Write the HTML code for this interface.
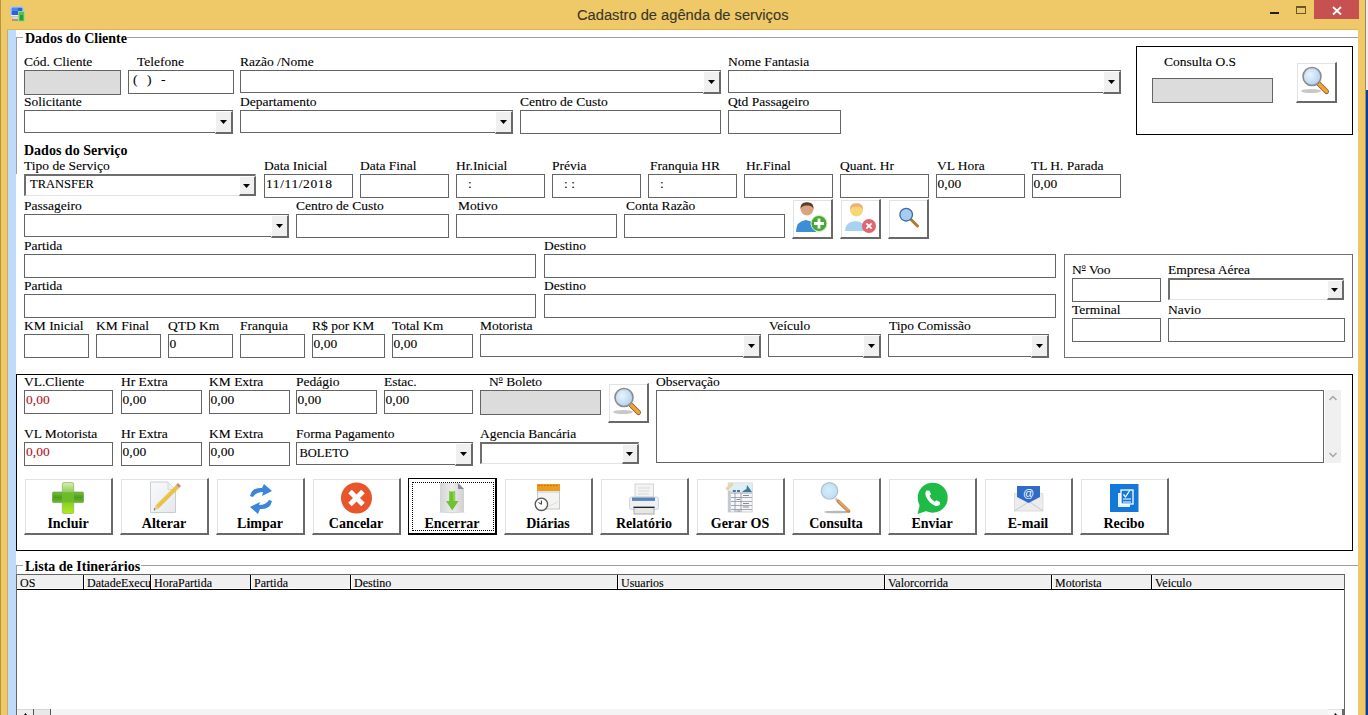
<!DOCTYPE html><html><head><meta charset="utf-8"><style>
*{margin:0;padding:0;box-sizing:border-box}
html,body{width:1368px;height:715px;overflow:hidden;background:#fff;position:relative;font-family:"Liberation Serif",serif;-webkit-text-stroke:0.1px}
div,span,i,svg{position:absolute;display:block}
.l{white-space:nowrap;line-height:1;color:#000}
.tb{background:#fff;border:1px solid #646464}
.tb span{top:1px;font-size:13.5px;line-height:16px;white-space:nowrap}
.cb{background:#fff;border:1px solid #646464}
.cb span{left:5px;top:0px;font-size:12.5px;line-height:16px;white-space:nowrap}
.dd{background:#F0F0F0;border-right:2px solid #696969;border-bottom:2px solid #696969;border-top:1px solid #fff;border-left:1px solid #fff}
.sk{border-top:2px solid #6E6E6E;border-left:2px solid #6E6E6E;border-right:1px solid #E3E3E3;border-bottom:1px solid #E3E3E3}
.bt{background:#fff;border-top:1px solid #fff;border-left:1px solid #fff;border-right:2px solid #696969;border-bottom:2px solid #696969;box-shadow:inset 1px 1px 0 #E3E3E3}
.bb{background:#fff;border-top:1px solid #fff;border-left:1px solid #fff;border-right:2px solid #696969;border-bottom:2px solid #696969;box-shadow:inset 1px 1px 0 #E3E3E3}
.bb b{position:absolute;left:0;right:0;top:38px;text-align:center;font-size:14px;line-height:14px;font-weight:700;white-space:nowrap;-webkit-text-stroke:0}
.gl{background:#A0A0A0}
.hd{font-size:12px;line-height:12px;white-space:nowrap;top:5px}
</style></head><body>

<div style="left:0;top:0;width:1368px;height:30px;background:#EFC867"></div>
<div style="left:0;top:0;width:8px;height:715px;background:#EFC867"></div>
<div style="left:0;top:0;width:1px;height:715px;background:#B8923F"></div>
<div style="left:7px;top:29px;width:1px;height:686px;background:#C9A872"></div>
<div style="left:7px;top:29px;width:1351px;height:1px;background:#D9B468"></div>
<div style="left:1358px;top:29px;width:1px;height:686px;background:#CDAE78"></div>
<div style="left:1358px;top:0;width:10px;height:715px;background:#EFC867"></div>
<div style="left:1365px;top:0;width:1px;height:715px;background:#A88A4A"></div>
<div style="left:1366px;top:0;width:2px;height:90px;background:#EDEDED"></div>
<div style="left:1366px;top:90px;width:2px;height:625px;background:#0A3CA8"></div>
<div style="left:8px;top:30px;width:8px;height:685px;background:#BEDBFA"></div>
<div style="left:16px;top:30px;width:1342px;height:1px;background:#FEFDE6"></div>
<div style="left:577px;top:6px;font-family:'Liberation Sans',sans-serif;font-size:14.7px;line-height:18px;color:#3A3626;white-space:nowrap">Cadastro de agênda de serviços</div>
<div style="left:1270px;top:12px;width:9px;height:2px;background:#222"></div>
<div style="left:1296px;top:6px;width:10px;height:8px;border:1px solid #6A5626;border-top-width:2px"></div>
<div style="left:1314px;top:0;width:45px;height:19px;background:#C75050"></div>
<svg style="left:1331px;top:5px" width="12" height="11" viewBox="0 0 12 11"><path d="M2 2 L10 9.5 M10 2 L2 9.5" stroke="#fff" stroke-width="1.8"/></svg>
<svg style="left:6px;top:2px" width="24" height="24" viewBox="0 0 24 24"><rect x="4.5" y="4.5" width="13" height="10" fill="#E4ECF6" stroke="#B8C6D6" stroke-width="1"/><rect x="5.5" y="5.5" width="11" height="7.5" fill="#2C62D6"/><rect x="6" y="6" width="6" height="3" fill="#4A86E8"/><rect x="7" y="15" width="5" height="2.5" fill="#D8D8D8"/><rect x="6" y="17.5" width="6" height="1" fill="#6A6A50"/><rect x="12.5" y="9.5" width="6" height="10" fill="#5BBE4E" stroke="#A6E090" stroke-width="0.8"/><rect x="14" y="13" width="3" height="5" fill="#2E9A36"/></svg>
<div class="gl" style="left:16px;top:37px;width:7px;height:1px"></div>
<div class="gl" style="left:127px;top:37px;width:1231px;height:1px"></div>
<div class="gl" style="left:16px;top:37px;width:1px;height:137px"></div>
<div class="l" style="left:25px;top:31.77px;font-size:14px;font-weight:700;-webkit-text-stroke:0;">Dados do Cliente</div>
<div class="l" style="left:24px;top:54.69px;font-size:13.5px;">Cód. Cliente</div>
<div class="l" style="left:137px;top:54.69px;font-size:13.5px;">Telefone</div>
<div class="l" style="left:240px;top:54.69px;font-size:13.5px;">Razão /Nome</div>
<div class="l" style="left:728px;top:54.69px;font-size:13.5px;">Nome Fantasia</div>
<div class="tb" style="left:24px;top:70px;width:97px;height:25px;background:#DCDCDC;"></div>
<div class="tb" style="left:128px;top:70px;width:106px;height:24px"><span style="left:4px;top:1px">(</span><span style="left:18px;top:1px">)</span><span style="left:32px;top:1px">-</span></div>
<div class="cb" style="left:240px;top:70px;width:481px;height:23px;"></div>
<div class="dd" style="left:703px;top:71px;width:18px;height:23px"></div>
<svg style="left:708px;top:80px" width="7" height="4" viewBox="0 0 7 4"><path d="M0 0H7L3.5 4Z" fill="#000"/></svg>
<div class="cb" style="left:728px;top:70px;width:393px;height:23px;"></div>
<div class="dd" style="left:1103px;top:71px;width:18px;height:23px"></div>
<svg style="left:1108px;top:80px" width="7" height="4" viewBox="0 0 7 4"><path d="M0 0H7L3.5 4Z" fill="#000"/></svg>
<div style="left:1136px;top:46px;width:217px;height:89px;border:1px solid #000"></div>
<div class="l" style="left:1164px;top:54.69px;font-size:13.5px;">Consulta O.S</div>
<div class="tb" style="left:1152px;top:78px;width:121px;height:25px;background:#DCDCDC;"></div>
<div class="bt" style="left:1296px;top:62px;width:41px;height:41px;"><svg style="left:2px;top:2px" width="36" height="36" viewBox="0 0 36 36"><defs><radialGradient id="lens" cx="0.4" cy="0.4" r="0.7"><stop offset="0" stop-color="#EAF4FD"/><stop offset="1" stop-color="#A9CDEE"/></radialGradient></defs><ellipse cx="12" cy="26" rx="10" ry="2" fill="#C8C8C8"/><path d="M19.5 18.5 L27.5 26.5" stroke="#8A5A20" stroke-width="5" stroke-linecap="round"/><path d="M19.5 18.5 L27.5 26.5" stroke="#F2A23A" stroke-width="3.4" stroke-linecap="round"/><circle cx="13" cy="11.5" r="9" fill="url(#lens)" stroke="#8C8C8C" stroke-width="1.6"/></svg></div>
<div class="l" style="left:24px;top:94.69px;font-size:13.5px;">Solicitante</div>
<div class="l" style="left:240px;top:94.69px;font-size:13.5px;">Departamento</div>
<div class="l" style="left:520px;top:94.69px;font-size:13.5px;">Centro de Custo</div>
<div class="l" style="left:728px;top:94.69px;font-size:13.5px;">Qtd Passageiro</div>
<div class="cb" style="left:24px;top:110px;width:209px;height:23px;"></div>
<div class="dd" style="left:215px;top:111px;width:18px;height:23px"></div>
<svg style="left:220px;top:120px" width="7" height="4" viewBox="0 0 7 4"><path d="M0 0H7L3.5 4Z" fill="#000"/></svg>
<div class="cb" style="left:240px;top:110px;width:273px;height:23px;"></div>
<div class="dd" style="left:495px;top:111px;width:18px;height:23px"></div>
<svg style="left:500px;top:120px" width="7" height="4" viewBox="0 0 7 4"><path d="M0 0H7L3.5 4Z" fill="#000"/></svg>
<div class="tb" style="left:520px;top:110px;width:201px;height:24px;"></div>
<div class="tb" style="left:728px;top:110px;width:113px;height:24px;"></div>
<div class="l" style="left:24px;top:143.78px;font-size:14px;font-weight:700;-webkit-text-stroke:0;">Dados do Serviço</div>
<div class="l" style="left:24px;top:158.69px;font-size:13.5px;">Tipo de Serviço</div>
<div class="l" style="left:264px;top:158.69px;font-size:13.5px;">Data Inicial</div>
<div class="l" style="left:360px;top:158.69px;font-size:13.5px;">Data Final</div>
<div class="l" style="left:456px;top:158.69px;font-size:13.5px;">Hr.Inicial</div>
<div class="l" style="left:552px;top:158.69px;font-size:13.5px;">Prévia</div>
<div class="l" style="left:650px;top:158.69px;font-size:13.5px;">Franquia HR</div>
<div class="l" style="left:746px;top:158.69px;font-size:13.5px;">Hr.Final</div>
<div class="l" style="left:840px;top:158.69px;font-size:13.5px;">Quant. Hr</div>
<div class="l" style="left:937px;top:158.69px;font-size:13.5px;">VL Hora</div>
<div class="l" style="left:1031px;top:158.69px;font-size:13.5px;">TL H. Parada</div>
<div class="cb sk" style="left:24px;top:174px;width:232px;height:22px;"><span style="left:4px;top:0px">TRANSFER</span></div>
<div class="dd" style="left:239px;top:176px;width:17px;height:20px"></div>
<svg style="left:243px;top:184px" width="7" height="4" viewBox="0 0 7 4"><path d="M0 0H7L3.5 4Z" fill="#000"/></svg>
<div class="tb" style="left:264px;top:174px;width:89px;height:24px;"><span style="left:1px;letter-spacing:0.6px;">11/11/2018</span></div>
<div class="tb" style="left:360px;top:174px;width:89px;height:24px;"></div>
<div class="tb" style="left:456px;top:174px;width:89px;height:24px;"><span style="left:11px;">:</span></div>
<div class="tb" style="left:552px;top:174px;width:89px;height:24px;"><span style="left:11px;">: :</span></div>
<div class="tb" style="left:648px;top:174px;width:89px;height:24px;"><span style="left:11px;">:</span></div>
<div class="tb" style="left:744px;top:174px;width:89px;height:24px;"></div>
<div class="tb" style="left:840px;top:174px;width:89px;height:24px;"></div>
<div class="tb" style="left:936px;top:174px;width:89px;height:24px;"><span style="left:0.5px;">0,00</span></div>
<div class="tb" style="left:1032px;top:174px;width:89px;height:24px;"><span style="left:0.5px;">0,00</span></div>
<div class="l" style="left:24px;top:198.69px;font-size:13.5px;">Passageiro</div>
<div class="l" style="left:296px;top:198.69px;font-size:13.5px;">Centro de Custo</div>
<div class="l" style="left:458px;top:198.69px;font-size:13.5px;">Motivo</div>
<div class="l" style="left:626px;top:198.69px;font-size:13.5px;">Conta Razão</div>
<div class="cb" style="left:24px;top:214px;width:265px;height:23px;"></div>
<div class="dd" style="left:271px;top:215px;width:18px;height:23px"></div>
<svg style="left:276px;top:224px" width="7" height="4" viewBox="0 0 7 4"><path d="M0 0H7L3.5 4Z" fill="#000"/></svg>
<div class="tb" style="left:296px;top:214px;width:153px;height:24px;"></div>
<div class="tb" style="left:456px;top:214px;width:161px;height:24px;"></div>
<div class="tb" style="left:624px;top:214px;width:161px;height:24px;"></div>
<div class="bt" style="left:792px;top:199px;width:41px;height:40px;"><svg style="left:1px;top:1px" width="38" height="38" viewBox="0 0 38 38"><path d="M2 31 Q2 20 12 19 Q22 20 22 31 Z" fill="#3C8FD6"/><circle cx="13" cy="8" r="6.5" fill="#D9A581"/><path d="M6.5 8 Q6 1 13 1.2 Q20 1 19.5 8 Q18 4 13 4.5 Q8 4 6.5 8Z" fill="#5A3C26"/><circle cx="25" cy="22.5" r="8" fill="#45A83C" stroke="#D8F5A8" stroke-width="1"/><path d="M25 17.5 V27.5 M20 22.5 H30" stroke="#fff" stroke-width="2.8"/></svg></div>
<div class="bt" style="left:840px;top:199px;width:41px;height:40px;"><svg style="left:1px;top:1px" width="38" height="38" viewBox="0 0 38 38"><path d="M3 30 Q3 21 13.5 20 Q24 21 24 30 Z" fill="#A8D2F2"/><circle cx="14.5" cy="9" r="6.5" fill="#F5D77A"/><path d="M8 9 Q7.5 2 14.5 2.2 Q21.5 2 21 9 Q19.5 5 14.5 5.5 Q9.5 5 8 9Z" fill="#EFAE6E"/><circle cx="27" cy="25" r="7" fill="#E26470"/><path d="M24.3 22.3 L29.7 27.7 M29.7 22.3 L24.3 27.7" stroke="#fff" stroke-width="1.8"/></svg></div>
<div class="bt" style="left:888px;top:199px;width:41px;height:40px;"><svg style="left:1px;top:1px" width="38" height="38" viewBox="0 0 38 38"><path d="M20.5 18 L27.5 25" stroke="#B07A2A" stroke-width="3" stroke-linecap="round"/><circle cx="16.2" cy="13.7" r="6.3" fill="#A6CCF2" stroke="#3E68A8" stroke-width="1.3"/></svg></div>
<div class="l" style="left:24px;top:238.69px;font-size:13.5px;">Partida</div>
<div class="l" style="left:544px;top:238.69px;font-size:13.5px;">Destino</div>
<div class="tb" style="left:24px;top:254px;width:512px;height:24px;"></div>
<div class="tb" style="left:544px;top:254px;width:512px;height:24px;"></div>
<div class="l" style="left:24px;top:278.69px;font-size:13.5px;">Partida</div>
<div class="l" style="left:544px;top:278.69px;font-size:13.5px;">Destino</div>
<div class="tb" style="left:24px;top:294px;width:512px;height:24px;"></div>
<div class="tb" style="left:544px;top:294px;width:512px;height:24px;"></div>
<div style="left:1064px;top:254px;width:289px;height:104px;border:1px solid #707070"></div>
<div class="l" style="left:1072px;top:262.69px;font-size:13.5px;">N<sup style='font-size:8px;text-decoration:underline;vertical-align:5px'>o</sup> Voo</div>
<div class="l" style="left:1168px;top:262.69px;font-size:13.5px;">Empresa Aérea</div>
<div class="tb" style="left:1072px;top:278px;width:89px;height:24px;"></div>
<div class="cb sk" style="left:1168px;top:278px;width:176px;height:22px;"></div>
<div class="dd" style="left:1327px;top:280px;width:17px;height:20px"></div>
<svg style="left:1331px;top:288px" width="7" height="4" viewBox="0 0 7 4"><path d="M0 0H7L3.5 4Z" fill="#000"/></svg>
<div class="l" style="left:1072px;top:302.69px;font-size:13.5px;">Terminal</div>
<div class="l" style="left:1168px;top:302.69px;font-size:13.5px;">Navio</div>
<div class="tb" style="left:1072px;top:318px;width:89px;height:24px;"></div>
<div class="tb" style="left:1168px;top:318px;width:177px;height:24px;"></div>
<div class="l" style="left:24px;top:318.69px;font-size:13.5px;">KM Inicial</div>
<div class="l" style="left:96px;top:318.69px;font-size:13.5px;">KM Final</div>
<div class="l" style="left:168px;top:318.69px;font-size:13.5px;">QTD Km</div>
<div class="l" style="left:240px;top:318.69px;font-size:13.5px;">Franquia</div>
<div class="l" style="left:312px;top:318.69px;font-size:13.5px;">R$ por KM</div>
<div class="l" style="left:392px;top:318.69px;font-size:13.5px;">Total Km</div>
<div class="l" style="left:480px;top:318.69px;font-size:13.5px;">Motorista</div>
<div class="l" style="left:769px;top:318.69px;font-size:13.5px;">Veículo</div>
<div class="l" style="left:889px;top:318.69px;font-size:13.5px;">Tipo Comissão</div>
<div class="tb" style="left:24px;top:334px;width:65px;height:24px;"></div>
<div class="tb" style="left:96px;top:334px;width:65px;height:24px;"></div>
<div class="tb" style="left:168px;top:334px;width:65px;height:24px;"><span style="left:0.5px;">0</span></div>
<div class="tb" style="left:240px;top:334px;width:65px;height:24px;"></div>
<div class="tb" style="left:312px;top:334px;width:73px;height:24px;"><span style="left:0.5px;">0,00</span></div>
<div class="tb" style="left:392px;top:334px;width:81px;height:24px;"><span style="left:0.5px;">0,00</span></div>
<div class="cb" style="left:480px;top:334px;width:281px;height:23px;"></div>
<div class="dd" style="left:743px;top:335px;width:18px;height:23px"></div>
<svg style="left:748px;top:344px" width="7" height="4" viewBox="0 0 7 4"><path d="M0 0H7L3.5 4Z" fill="#000"/></svg>
<div class="cb" style="left:768px;top:334px;width:113px;height:23px;"></div>
<div class="dd" style="left:863px;top:335px;width:18px;height:23px"></div>
<svg style="left:868px;top:344px" width="7" height="4" viewBox="0 0 7 4"><path d="M0 0H7L3.5 4Z" fill="#000"/></svg>
<div class="cb" style="left:888px;top:334px;width:161px;height:23px;"></div>
<div class="dd" style="left:1031px;top:335px;width:18px;height:23px"></div>
<svg style="left:1036px;top:344px" width="7" height="4" viewBox="0 0 7 4"><path d="M0 0H7L3.5 4Z" fill="#000"/></svg>
<div style="left:16px;top:374px;width:1337px;height:177px;border:1px solid #000"></div>
<div class="l" style="left:24px;top:374.69px;font-size:13.5px;">VL.Cliente</div>
<div class="l" style="left:121px;top:374.69px;font-size:13.5px;">Hr Extra</div>
<div class="l" style="left:209px;top:374.69px;font-size:13.5px;">KM Extra</div>
<div class="l" style="left:296px;top:374.69px;font-size:13.5px;">Pedágio</div>
<div class="l" style="left:384px;top:374.69px;font-size:13.5px;">Estac.</div>
<div class="l" style="left:489px;top:374.69px;font-size:13.5px;">N<sup style='font-size:8px;text-decoration:underline;vertical-align:5px'>o</sup> Boleto</div>
<div class="l" style="left:656px;top:374.69px;font-size:13.5px;">Observação</div>
<div class="tb" style="left:24px;top:390px;width:89px;height:24px;"><span style="left:1px;color:#B4101A;">0,00</span></div>
<div class="tb" style="left:121px;top:390px;width:81px;height:24px;"><span style="left:0.5px;">0,00</span></div>
<div class="tb" style="left:209px;top:390px;width:81px;height:24px;"><span style="left:0.5px;">0,00</span></div>
<div class="tb" style="left:296px;top:390px;width:81px;height:24px;"><span style="left:0.5px;">0,00</span></div>
<div class="tb" style="left:384px;top:390px;width:89px;height:24px;"><span style="left:0.5px;">0,00</span></div>
<div class="tb" style="left:480px;top:390px;width:121px;height:25px;background:#DCDCDC;"></div>
<div class="bt" style="left:608px;top:383px;width:41px;height:40px;"><svg style="left:2px;top:2px" width="36" height="36" viewBox="0 0 36 36"><defs><radialGradient id="lens" cx="0.4" cy="0.4" r="0.7"><stop offset="0" stop-color="#EAF4FD"/><stop offset="1" stop-color="#A9CDEE"/></radialGradient></defs><ellipse cx="12" cy="26" rx="10" ry="2" fill="#C8C8C8"/><path d="M19.5 18.5 L27.5 26.5" stroke="#8A5A20" stroke-width="5" stroke-linecap="round"/><path d="M19.5 18.5 L27.5 26.5" stroke="#F2A23A" stroke-width="3.4" stroke-linecap="round"/><circle cx="13" cy="11.5" r="9" fill="url(#lens)" stroke="#8C8C8C" stroke-width="1.6"/></svg></div>
<div class="tb" style="left:656px;top:390px;width:668px;height:73px;"></div>
<div style="left:1325px;top:390px;width:16px;height:73px;background:#F0F0F0"></div>
<svg style="left:1325px;top:390px" width="16" height="73" viewBox="0 0 16 73"><path d="M4.5 10 L8 6.5 L11.5 10 M4.5 63 L8 66.5 L11.5 63" stroke="#A6A6A6" stroke-width="1.5" fill="none"/></svg>
<div class="l" style="left:24px;top:426.69px;font-size:13.5px;">VL Motorista</div>
<div class="l" style="left:121px;top:426.69px;font-size:13.5px;">Hr Extra</div>
<div class="l" style="left:209px;top:426.69px;font-size:13.5px;">KM Extra</div>
<div class="l" style="left:296px;top:426.69px;font-size:13.5px;">Forma Pagamento</div>
<div class="l" style="left:480px;top:426.69px;font-size:13.5px;">Agencia Bancária</div>
<div class="tb" style="left:24px;top:442px;width:89px;height:24px;"><span style="left:1px;color:#B4101A;">0,00</span></div>
<div class="tb" style="left:121px;top:442px;width:81px;height:24px;"><span style="left:0.5px;">0,00</span></div>
<div class="tb" style="left:209px;top:442px;width:81px;height:24px;"><span style="left:0.5px;">0,00</span></div>
<div class="cb" style="left:296px;top:442px;width:177px;height:23px;"><span style="left:2.5px;top:2px">BOLETO</span></div>
<div class="dd" style="left:455px;top:443px;width:18px;height:23px"></div>
<svg style="left:460px;top:452px" width="7" height="4" viewBox="0 0 7 4"><path d="M0 0H7L3.5 4Z" fill="#000"/></svg>
<div class="cb sk" style="left:480px;top:442px;width:159px;height:22px;"></div>
<div class="dd" style="left:622px;top:444px;width:17px;height:20px"></div>
<svg style="left:626px;top:452px" width="7" height="4" viewBox="0 0 7 4"><path d="M0 0H7L3.5 4Z" fill="#000"/></svg>
<div class="bb" style="left:24px;top:478px;width:89px;height:57px"><svg style="left:27px;top:3px" width="33" height="33" viewBox="0 0 33 33"><defs><linearGradient id="gv" x1="0" y1="0" x2="0" y2="1"><stop offset="0" stop-color="#D6EFB0"/><stop offset="0.45" stop-color="#72C02C"/><stop offset="1" stop-color="#B0EC1A"/></linearGradient><linearGradient id="gh" x1="0" y1="0" x2="0" y2="1"><stop offset="0" stop-color="#78C03A"/><stop offset="0.5" stop-color="#4E9E1E"/><stop offset="1" stop-color="#6CB826"/></linearGradient></defs><rect x="0.5" y="10" width="31" height="10.6" rx="1.2" fill="url(#gh)" stroke="#5C9A3A" stroke-width="0.6"/><rect x="10.3" y="0.5" width="11.4" height="31" rx="1.5" fill="url(#gv)" stroke="#7AA860" stroke-width="0.6"/><rect x="10.6" y="10.3" width="10.8" height="10" fill="#6CBC28"/></svg><b>Incluir</b></div>
<div class="bb" style="left:120px;top:478px;width:89px;height:57px"><svg style="left:28px;top:0px" width="34" height="36" viewBox="0 0 34 36"><defs><linearGradient id="ppr" x1="0" y1="0" x2="1" y2="1"><stop offset="0" stop-color="#FAFAFC"/><stop offset="1" stop-color="#E6E8EE"/></linearGradient><linearGradient id="pen" x1="0" y1="0" x2="1" y2="1"><stop offset="0" stop-color="#F6E07A"/><stop offset="1" stop-color="#D8A818"/></linearGradient></defs><path d="M1.5 3 H19 L26.5 10.5 V33.5 H1.5Z" fill="url(#ppr)" stroke="#C8CCD4" stroke-width="1"/><path d="M19 3 V10.5 H26.5" fill="#F0F0F4" stroke="#D0D0D8" stroke-width="0.8"/><path d="M8 28 L28.5 7.5" stroke="url(#pen)" stroke-width="4.2" stroke-linecap="butt"/><path d="M28.5 7.5 L30.5 5.5" stroke="#C09070" stroke-width="4.2"/><path d="M8 28 L5.5 31 L4.8 29.5Z" fill="#3A3A3A"/><path d="M6.5 26.5 L9.5 29.5 L5 31.5Z" fill="#E8C89A"/><path d="M5.6 30.2 L4.8 31.5 L6.2 31Z" fill="#222"/></svg><b>Alterar</b></div>
<div class="bb" style="left:216px;top:478px;width:89px;height:57px"><svg style="left:30px;top:4px" width="28" height="32" viewBox="0 0 28 32"><path d="M3 13 Q5 4 15 5 L17 1 L25 8 L15 13 L16 9 Q9 9 6 14Z" fill="#3A86D8"/><path d="M25 18 Q23 27 13 26 L11 31 L3 24 L13 19 L12 22 Q19 22 22 17Z" fill="#3A86D8"/></svg><b>Limpar</b></div>
<div class="bb" style="left:312px;top:478px;width:89px;height:57px"><svg style="left:27px;top:3px" width="34" height="34" viewBox="0 0 34 34"><circle cx="16.5" cy="16" r="15.5" fill="#E8552A"/><path d="M10 9.5 L23 22.5 M23 9.5 L10 22.5" stroke="#fff" stroke-width="5"/></svg><b>Cancelar</b></div>
<div style="left:408px;top:478px;width:89px;height:57px;background:#fff;border:1px solid #000;border-right:2px solid #000;border-bottom:2px solid #000"><svg style="left:25px;top:3px" width="34" height="34" viewBox="0 0 34 34"><defs><linearGradient id="pg" x1="0" y1="0" x2="1" y2="0"><stop offset="0" stop-color="#D4D4D4"/><stop offset="0.5" stop-color="#ECECEC"/><stop offset="1" stop-color="#D0D0D0"/></linearGradient></defs><ellipse cx="18" cy="30" rx="13" ry="1.2" fill="#D8D8D8"/><path d="M6 1 H24 L30 7 V30 H6Z" fill="url(#pg)"/><path d="M24 1 L30 7 H24Z" fill="#8A8A8A"/><path d="M15.2 9 H21.2 V19 H24.5 L18.2 28.5 L12 19 H15.2Z" fill="#6FC332"/><path d="M16 9.5 H20 V19" stroke="#A8E070" stroke-width="1" fill="none"/></svg><b style="position:absolute;left:0;right:0;top:38px;text-align:center;font-size:14px;line-height:14px;font-weight:700;white-space:nowrap;-webkit-text-stroke:0">Encerrar</b><i style="left:3px;top:3px;width:82px;height:49px;border:1px dotted #000"></i></div>
<div class="bb" style="left:504px;top:478px;width:89px;height:57px"><svg style="left:25px;top:4px" width="34" height="34" viewBox="0 0 34 34"><rect x="7.5" y="1.5" width="22" height="24.5" fill="#F4F4F2" stroke="#C8C8C8"/><rect x="7" y="1" width="23" height="7" fill="#EE9A1A"/><path d="M8 2.5 H29" stroke="#B86A10" stroke-width="1" stroke-dasharray="1.5 1.5"/><rect x="8" y="8" width="21" height="2" fill="#D6E2F0"/><path d="M17 24 L28 19" stroke="#ddd"/><circle cx="11.4" cy="21.3" r="6.2" fill="#FAFAFA" stroke="#555" stroke-width="1.3"/><path d="M11.4 17.5 V21.3 L8.5 19.5" stroke="#333" stroke-width="1" fill="none"/></svg><b>Diárias</b></div>
<div class="bb" style="left:600px;top:478px;width:89px;height:57px"><svg style="left:28px;top:1px" width="34" height="36" viewBox="0 0 34 36"><rect x="6" y="4" width="18.5" height="13" fill="#F4F4F4" stroke="#D4D4D4"/><path d="M9 8 H21 M9 11 H21 M9 14 H20" stroke="#D8D8D8"/><rect x="0.5" y="17" width="29" height="12.5" rx="2" fill="#EDF1F6" stroke="#CFD6DE"/><rect x="3" y="17.5" width="23" height="3.4" fill="#5B82BA"/><rect x="5" y="27.5" width="20" height="6.5" fill="#E6E6E2" stroke="#ABABAB"/><path d="M4.5 27.3 H25.5" stroke="#1A1A1A" stroke-width="1.3"/></svg><b>Relatório</b></div>
<div class="bb" style="left:696px;top:478px;width:89px;height:57px"><svg style="left:28px;top:3px" width="34" height="34" viewBox="0 0 34 34"><rect x="3.2" y="1" width="24" height="29" fill="#F4F6F8" stroke="#C4CAD0" stroke-width="0.8"/><rect x="4" y="1.5" width="23" height="9" fill="#DDEEF8"/><rect x="3.2" y="9" width="2.6" height="21" fill="#C4C8CC"/><path d="M6 11 H27 M6 15.5 H27 M6 19.5 H27 M6 23.5 H27 M6 27.5 H27 M10 11 V30 M16 11 V30" stroke="#8A96A2" stroke-width="0.8"/><path d="M18 13.5 H24 M11.5 17.5 H15 M18 21.5 H24 M18 25 H24 M11.5 29 H15" stroke="#7A8088" stroke-width="0.9"/><rect x="7.8" y="8" width="3" height="2" fill="#587288"/><rect x="12" y="8" width="3" height="2" fill="#587288"/><path d="M17 10 H24 L27 10 L24.5 6.5 L22 3 L21.5 7 Q19 8 17 10Z" fill="#3E7894"/><path d="M1.5 7.5 L7.5 1.5" stroke="#E6D49A" stroke-width="3"/></svg><b>Gerar OS</b></div>
<div class="bb" style="left:792px;top:478px;width:89px;height:57px"><svg style="left:27px;top:2px" width="36" height="36" viewBox="0 0 36 36"><defs><radialGradient id="lens2" cx="0.45" cy="0.45" r="0.6"><stop offset="0" stop-color="#D4EEFA"/><stop offset="1" stop-color="#BFDDF2"/></radialGradient></defs><ellipse cx="17" cy="31" rx="13" ry="1.3" fill="#B8B8B8"/><path d="M15.5 17.5 L18 20" stroke="#C8C8C8" stroke-width="2.5"/><path d="M18.5 20.5 L28.5 30" stroke="#C88A48" stroke-width="3.6" stroke-linecap="round"/><path d="M18.5 20 L28.5 29.5" stroke="#E8B078" stroke-width="1.2"/><circle cx="9.5" cy="9.9" r="8.2" fill="url(#lens2)" stroke="#B4C4D0" stroke-width="1.4"/></svg><b>Consulta</b></div>
<div class="bb" style="left:888px;top:478px;width:89px;height:57px"><svg style="left:27px;top:3px" width="34" height="34" viewBox="0 0 34 34"><circle cx="16.7" cy="15.7" r="15" fill="#1EBB46"/><path d="M4 22 L1.5 32 L12 28.5Z" fill="#1EBB46"/><path d="M10.5 8.5 Q8.5 10.5 10 14.5 Q12.5 20.5 18.5 23.5 Q22 25 24.2 22.2 L23.8 20 L20.5 18.3 L18.8 19.8 Q15 17.8 13.5 13.8 L15 12.2 L13.5 8.8Z" fill="#fff"/></svg><b>Enviar</b></div>
<div class="bb" style="left:984px;top:478px;width:89px;height:57px"><svg style="left:28px;top:6px"  width="32" height="32" viewBox="0 0 32 32"><path d="M1.5 8.5 H30 V26 H1.5Z" fill="#ECECEC" stroke="#DDD"/><path d="M1.5 26 L16 16.5 L30 26" stroke="#C8C8C8" fill="none"/><path d="M4 1 H27 V12 L15.5 18 L4 12Z" fill="#2E6CC8"/><text x="15.5" y="12" font-size="11" fill="#fff" text-anchor="middle" font-family="Liberation Sans">@</text></svg><b>E-mail</b></div>
<div class="bb" style="left:1080px;top:478px;width:89px;height:57px"><svg style="left:29px;top:5px" width="30" height="30" viewBox="0 0 30 30"><rect x="0" y="0" width="28.5" height="28" fill="#1478D8"/><rect x="8" y="9" width="12" height="14" fill="#fff" opacity="0.9"/><rect x="11" y="6" width="12" height="14" fill="#1478D8" stroke="#fff" stroke-width="1.3"/><path d="M13 15 H21 M13 18 H21" stroke="#fff" stroke-width="1"/><path d="M13.5 10.5 L15.5 13 L20 6" stroke="#fff" stroke-width="1.3" fill="none"/></svg><b>Recibo</b></div>
<div class="gl" style="left:16px;top:565px;width:7px;height:1px"></div>
<div class="gl" style="left:141px;top:565px;width:1217px;height:1px"></div>
<div class="gl" style="left:16px;top:565px;width:1px;height:10px"></div>
<div class="l" style="left:25px;top:559.77px;font-size:14px;font-weight:700;-webkit-text-stroke:0;">Lista de Itinerários</div>
<div style="left:16px;top:574px;width:1329px;height:160px;border:1px solid #646464;background:#fff"></div>
<div style="left:17px;top:575px;width:1327px;height:15px;background:#F0F0F0;border-bottom:1px solid #000;box-shadow:inset 0 -1px 0 #fff"></div>
<div style="left:83px;top:575px;width:1px;height:14px;background:#000"></div>
<div style="left:84px;top:575px;width:1px;height:14px;background:#fff"></div>
<div style="left:150px;top:575px;width:1px;height:14px;background:#000"></div>
<div style="left:151px;top:575px;width:1px;height:14px;background:#fff"></div>
<div style="left:250px;top:575px;width:1px;height:14px;background:#000"></div>
<div style="left:251px;top:575px;width:1px;height:14px;background:#fff"></div>
<div style="left:350px;top:575px;width:1px;height:14px;background:#000"></div>
<div style="left:351px;top:575px;width:1px;height:14px;background:#fff"></div>
<div style="left:617px;top:575px;width:1px;height:14px;background:#000"></div>
<div style="left:618px;top:575px;width:1px;height:14px;background:#fff"></div>
<div style="left:884px;top:575px;width:1px;height:14px;background:#000"></div>
<div style="left:885px;top:575px;width:1px;height:14px;background:#fff"></div>
<div style="left:1051px;top:575px;width:1px;height:14px;background:#000"></div>
<div style="left:1052px;top:575px;width:1px;height:14px;background:#fff"></div>
<div style="left:1151px;top:575px;width:1px;height:14px;background:#000"></div>
<div style="left:1152px;top:575px;width:1px;height:14px;background:#fff"></div>
<div class="hd" style="left:20px;top:577px">OS</div>
<div class="hd" style="left:87px;top:577px">DatadeExecu</div>
<div class="hd" style="left:154px;top:577px">HoraPartida</div>
<div class="hd" style="left:254px;top:577px">Partida</div>
<div class="hd" style="left:354px;top:577px">Destino</div>
<div class="hd" style="left:621px;top:577px">Usuarios</div>
<div class="hd" style="left:888px;top:577px">Valorcorrida</div>
<div class="hd" style="left:1055px;top:577px">Motorista</div>
<div class="hd" style="left:1155px;top:577px">Veiculo</div>
<div style="left:17px;top:709px;width:1327px;height:6px;background:#F4F4F4"></div>
<div style="left:17px;top:709px;width:33px;height:1px;background:#D8D8D8"></div>
<div style="left:18px;top:710px;width:15px;height:5px;background:#EDEDED"></div>
<div style="left:34px;top:710px;width:16px;height:5px;background:#E8E8E8"></div>
<div style="left:33px;top:709px;width:1px;height:6px;background:#555"></div>
<div style="left:50px;top:709px;width:1px;height:6px;background:#555"></div>
<svg style="left:22px;top:713px" width="7" height="2" viewBox="0 0 7 2"><path d="M3.5 0 L5 2 H2Z" fill="#000"/></svg>
<div style="left:1328px;top:709px;width:16px;height:1px;background:#E0E0E0"></div>
<div style="left:1328px;top:710px;width:15px;height:5px;background:#F8F8F8"></div>
<div style="left:1342px;top:709px;width:2px;height:6px;background:#6A6A6A"></div>
<svg style="left:1332px;top:713px" width="7" height="2" viewBox="0 0 7 2"><path d="M3.5 0 L5 2 H2Z" fill="#000"/></svg>
</body></html>
